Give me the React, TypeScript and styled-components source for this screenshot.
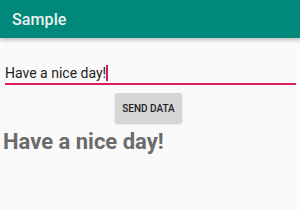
import { useState } from 'react';
import styled, { createGlobalStyle } from 'styled-components';

const GlobalStyle = createGlobalStyle`
	html, body {
		margin: 0;
		padding: 0;
		background: #fafafa;
		font-family: Roboto, "Noto Sans", sans-serif;
	}
`;

const Screen = styled.div`
	width: 300px;
	height: 210px;
	background: #fafafa;
	overflow: hidden;
	display: flex;
	flex-direction: column;
`;

const AppBar = styled.header`
	height: 38px;
	background: #00897b;
	display: flex;
	align-items: center;
	padding: 0 12px;
	box-shadow: 0 2px 4px rgba(0, 0, 0, 0.25);
	position: relative;
	z-index: 1;

	h1 {
		margin: 0;
		font-size: 16px;
		font-weight: 500;
		color: #f0f0f0;
		letter-spacing: 0.1px;
	}
`;

const Content = styled.main`
	display: flex;
	flex-direction: column;
	padding: 24px 4px 0 5px;
`;

const Field = styled.label`
	width: 291px;
	box-sizing: border-box;
	border-bottom: 2px solid #d81b60;
	display: flex;
	align-items: center;
	height: 23px;
	padding: 3px 0;
	font-size: 14px;
	color: #222;
	cursor: text;
`;

const Caret = styled.span`
	display: inline-block;
	width: 2px;
	height: 16px;
	background: #d81b60;
`;

const SendButton = styled.button`
	align-self: center;
	margin: 8px 0 0 -4px;
	width: 67px;
	height: 30px;
	border: none;
	border-radius: 2px;
	background: #d6d6d6;
	box-shadow: 0 1px 2px rgba(0, 0, 0, 0.2);
	font-family: Roboto, sans-serif;
	font-size: 10px;
	font-weight: 500;
	color: #222;
	padding: 0;
`;

const Output = styled.p`
	margin: 6px 0 0 -2px;
	font-size: 22px;
	font-weight: 700;
	color: #6b6b6b;
`;

const App = () => {
	const [text] = useState<string>('Have a nice day!');
	const [shown, setShown] = useState<string>('Have a nice day!');

	return (
		<Screen>
			<GlobalStyle />
			<AppBar><h1>Sample</h1></AppBar>
			<Content>
				<Field>
					<span>{text}</span>
					<Caret />
				</Field>
				<SendButton onClick={() => setShown(text)}>SEND DATA</SendButton>
				<Output>{shown}</Output>
			</Content>
		</Screen>
	);
};

export default App;
